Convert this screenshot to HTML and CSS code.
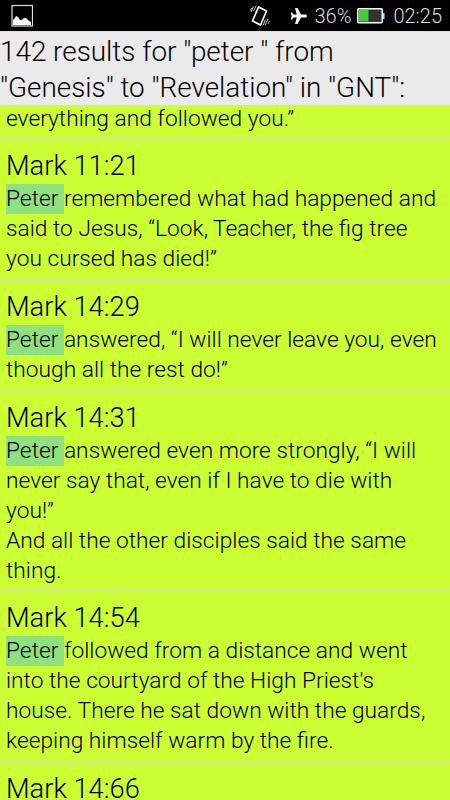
FILE: index.html
```
<!DOCTYPE html>
<html lang="en">
<head>
    <meta charset="UTF-8">
    <meta name="viewport" content="width=device-width, initial-scale=1.0">
    <title>Search results</title>
    <link rel="stylesheet" href="styles.css">
</head>
<body>
    <div class="status-bar">
        <svg class="picture-icon" width="24" height="24" viewBox="0 0 24 24">
            <rect x="3" y="1.500" width="20.500" height="20.500" fill="none" stroke="#ddd" stroke-width="1.200"/>
            <path d="M4 21v-5l2-2 1-2 2 1 2 3 2 0 2-2h2l2 2 3 2v3z" fill="#fff"/>
        </svg>
        <svg class="vibrate-icon" width="20" height="22" viewBox="0 0 20 22" fill="none" stroke="#fff">
            <path d="M8.500 2l8 4-6 14-8-4z" stroke-width="1.700" stroke-linejoin="round"/>
            <path d="M6 1L3.500 6M3.500 1.500L1 7M1.500 3L.5 5.500M18 14l-3 6M15.500 14.500l-2.500 6M19.500 16l-1.500 3" stroke-width=".8"/>
        </svg>
        <svg class="plane-icon" width="18" height="18" viewBox="0 0 18 18">
            <path d="M17 9c0-1-1-1.500-2-1.500h-4L7.500 1H5l1.800 6.500H3.500L2 5.500H.8L1.700 9l-.9 3.500H2l1.500-2h3.300L5 17h2.500l3.500-6.500h4c1 0 2-.5 2-1.500z" fill="#fff"/>
        </svg>
        <span class="percent">36%</span>
        <svg class="battery-icon" width="28" height="16" viewBox="0 0 28 16">
            <rect x=".75" y=".75" width="24.500" height="14" rx="1" fill="#333" stroke="#fff" stroke-width="1.500"/>
            <rect x="2" y="2" width="9.500" height="11.500" fill="#4c3"/>
            <rect x="26" y="5" width="1.500" height="6" fill="#ddd"/>
        </svg>
        <span class="clock">02:25</span>
    </div>
    <h1>142 results for "peter " from<br>"Genesis" to "Revelation" in "GNT":</h1>
    <div class="results">
        <div class="result">
            <p>everything and followed you.”</p>
        </div>
        <div class="result">
            <h2>Mark 11:21</h2>
            <p><mark>Peter </mark>remembered what had happened and<br>said to Jesus, “Look, Teacher, the fig tree<br>you cursed has died!”</p>
        </div>
        <div class="result">
            <h2>Mark 14:29</h2>
            <p><mark>Peter </mark>answered, “I will never leave you, even<br>though all the rest do!”</p>
        </div>
        <div class="result">
            <h2>Mark 14:31</h2>
            <p><mark>Peter </mark>answered even more strongly, “I will<br>never say that, even if I have to die with<br>you!”<br>And all the other disciples said the same<br>thing.</p>
        </div>
        <div class="result">
            <h2>Mark 14:54</h2>
            <p><mark>Peter </mark>followed from a distance and went<br>into the courtyard of the High Priest's<br>house. There he sat down with the guards,<br>keeping himself warm by the fire.</p>
        </div>
        <div class="result">
            <h2>Mark 14:66</h2>
        </div>
    </div>
</body>
</html>
```
FILE: styles.css
```
body {
    margin: 0;
    height: 800px;
    overflow: hidden;
    display: flex;
    flex-direction: column;
    font-family: Roboto, sans-serif;
    font-weight: 300;
    color: #000;
}
.status-bar {
    display: flex;
    align-items: center;
    flex: none;
    height: 31px;
    padding: 0 8px 0 9px;
    background-color: #000;
    color: #ddd;
    font-size: 20px;
}
.picture-icon {
    margin-top: 1px;
}
.vibrate-icon {
    margin-left: auto;
}
.plane-icon {
    margin-left: 20px;
}
.percent {
    margin-left: 6px;
}
.battery-icon {
    margin-left: 6px;
}
.clock {
    margin-left: 8px;
}
h1 {
    flex: none;
    height: 71px;
    margin: 0;
    padding-top: 2px;
    border-top: 1px solid #ddd;
    background-color: #eaeaea;
    font-size: 27.850px;
    font-weight: 300;
    line-height: 36px;
    white-space: nowrap;
}
.results {
    flex: 1;
    min-height: 0;
    overflow: hidden;
    background-color: #ccff33;
}
.result {
    padding: 8.200px 6px 4.500px;
    border-bottom: 2px solid #d8e2a8;
}
.result:first-child {
    height: 28.500px;
    padding-top: 0;
}
.result:first-child p {
    line-height: 28px;
}
h2 {
    margin: 0;
    font-size: 27.300px;
    font-weight: 300;
    line-height: 36px;
}
p {
    margin: 0;
    font-size: 22.750px;
    line-height: 30px;
    white-space: nowrap;
}
mark {
    display: inline-block;
    height: 30px;
    white-space: pre;
    vertical-align: top;
    background-color: #8ee080;
    color: inherit;
}
```
